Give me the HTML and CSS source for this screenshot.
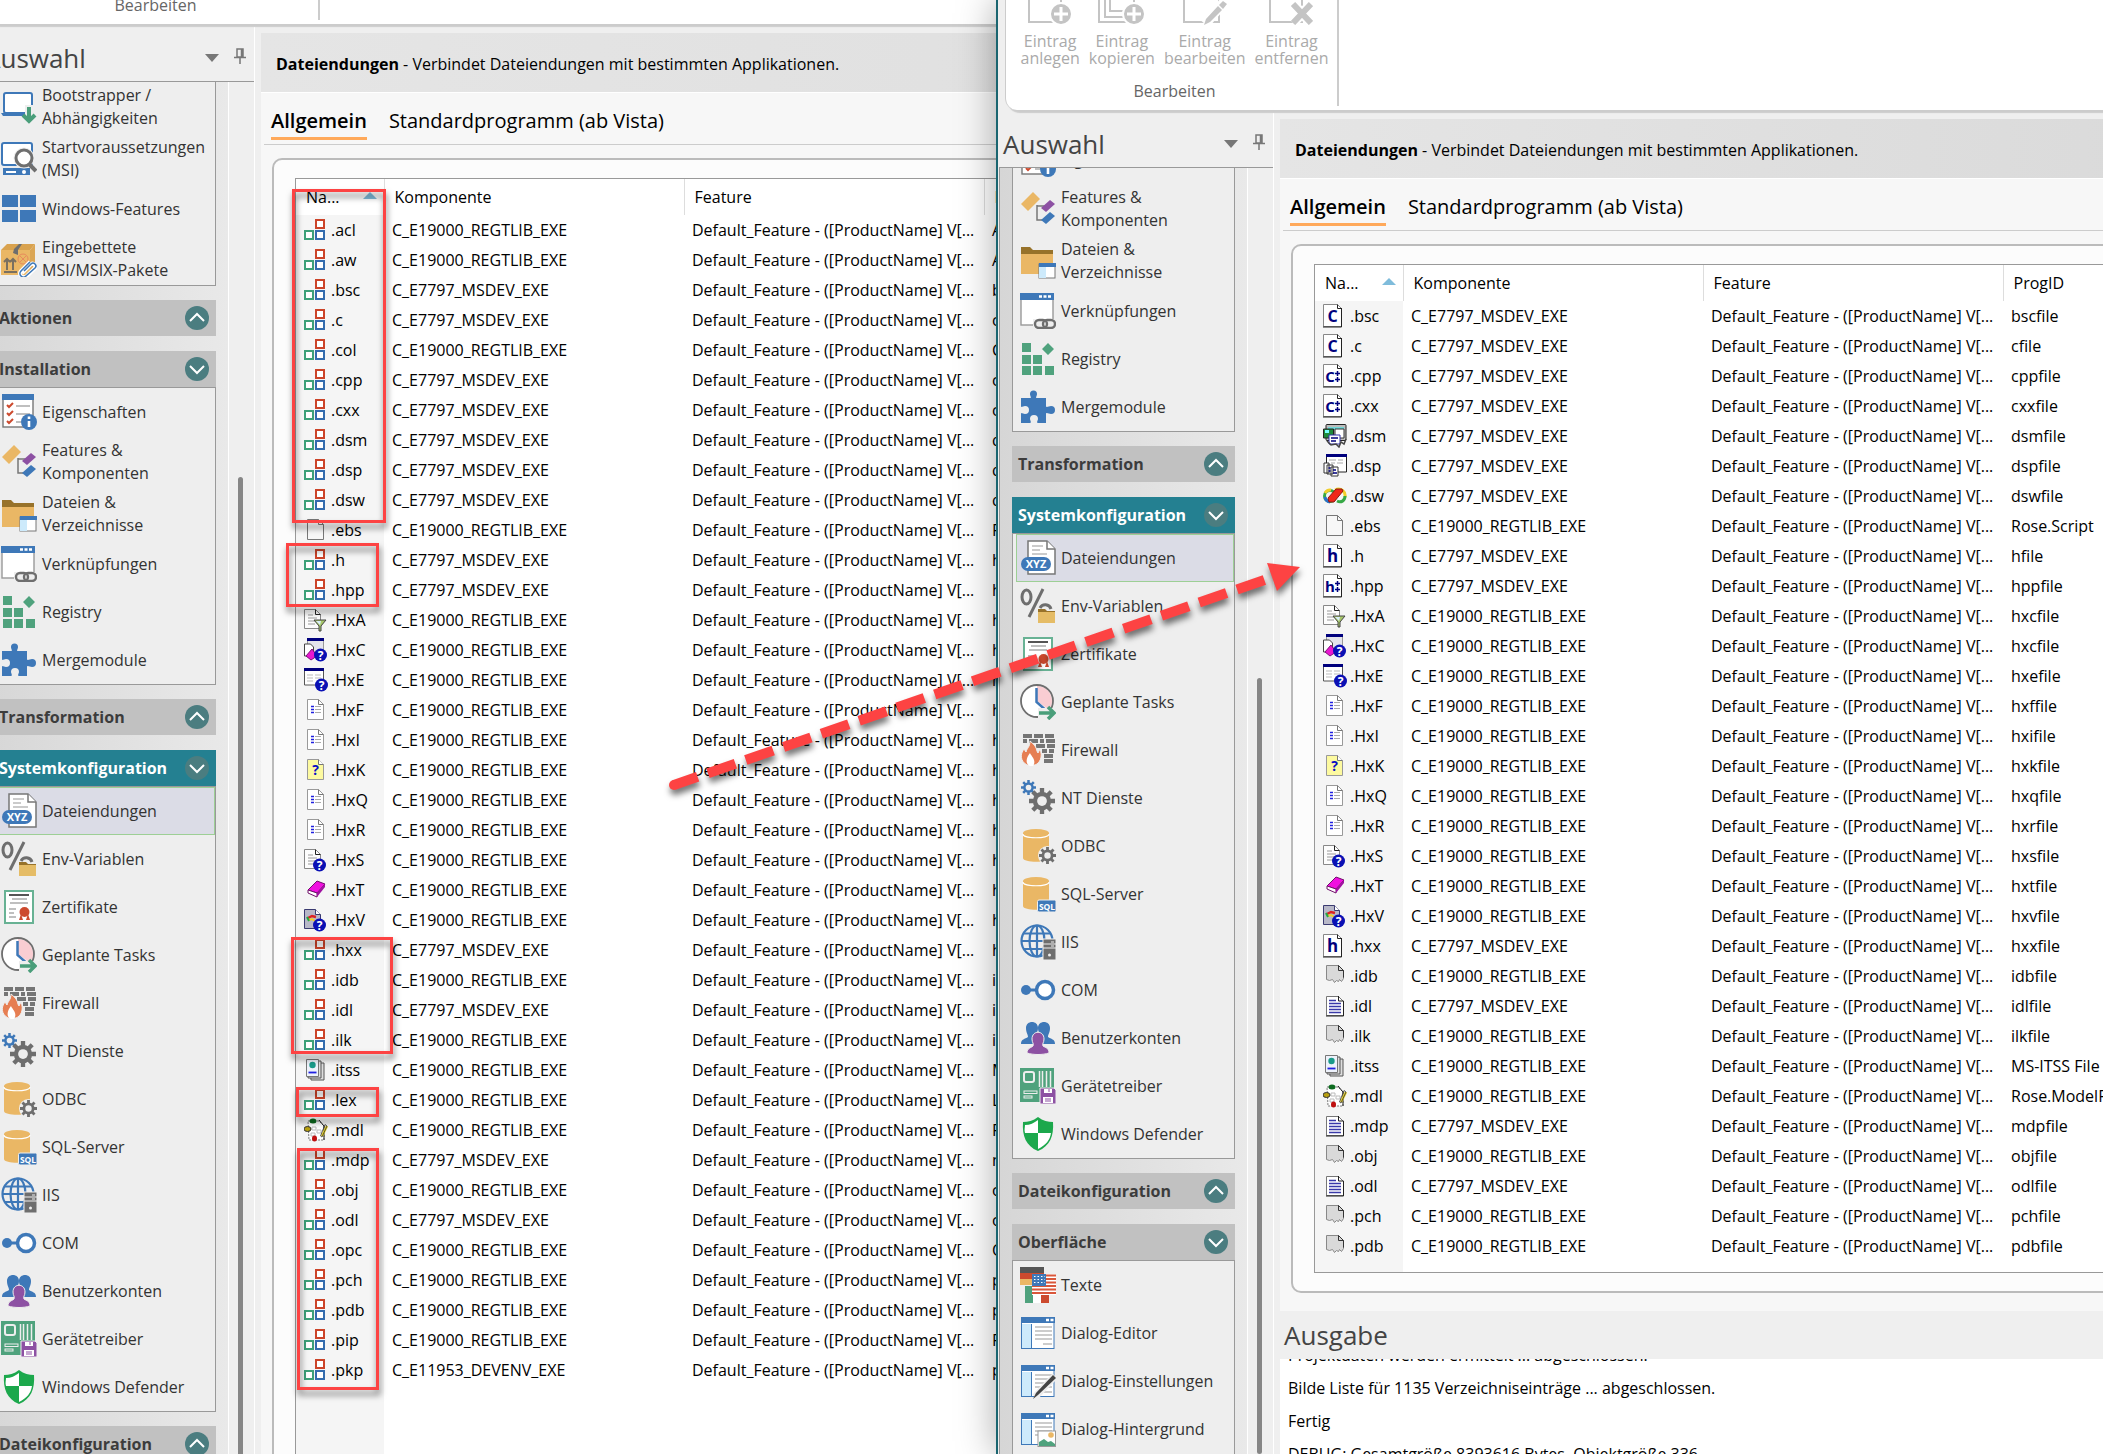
FILE: index.html
```html
<!DOCTYPE html>
<html lang="de">
<head>
<meta charset="utf-8">
<title>Dateiendungen</title>
<link rel="stylesheet" href="styles.css">
</head>
<body>
<svg class="sprite" aria-hidden="true">
  <symbol id="n-boot" viewBox="0 0 36 36"><rect x="3" y="4" width="28" height="20" rx="2" fill="#fff" stroke="#3e78b8" stroke-width="2"/><path d="M0 24h32v3H2z" fill="#3e78b8"/><path d="M28 16v12" stroke="#eee" stroke-width="8"/><path d="M28 18v14M22 26l6 6 6-6" fill="none" stroke="#4a9e7a" stroke-width="4"/></symbol>
  <symbol id="n-start" viewBox="0 0 36 36"><rect x="1" y="2" width="30" height="22" rx="2" fill="#fff" stroke="#3e78b8" stroke-width="2"/><path d="M2 27h27v7H2z" fill="#3e78b8"/><path d="M5 31h10" stroke="#fff" stroke-width="2"/><circle cx="23" cy="31" r="2" fill="#fff"/><circle cx="23" cy="17" r="8" fill="#fff" stroke="#eee" stroke-width="5"/><circle cx="23" cy="17" r="8" fill="#fff" stroke="#6e6e6e" stroke-width="3"/><path d="M28 23l7 7" stroke="#6e6e6e" stroke-width="4"/></symbol>
  <symbol id="n-win" viewBox="0 0 36 36"><path d="M1 4h16v12H1zM19 4h16v12H19zM1 19h16v12H1zM19 19h16v12H19z" fill="#3e78b8"/></symbol>
  <symbol id="n-box" viewBox="0 0 36 36"><path d="M0 9l6-6h28l-5 6z" fill="#d9a24e"/><path d="M0 9h29v25H0z" fill="#eab765"/><path d="M29 9l5-6v24l-5 7z" fill="#dba655"/><path d="M12 12l1-4 5-5h3l-4 6v5z" fill="#6e6e6e"/><path d="M6 29V19M12 29V19M3 21l3-3 3 3M9 21l3-3 3 3M3 31h13" fill="none" stroke="#7a7060" stroke-width="2"/><circle cx="22" cy="18" r="5" fill="none" stroke="#e88b5c"/><path d="M19 15l6 6M25 15l-6 6" stroke="#e88b5c"/><path d="M21 32l9-9a3 3 0 0 1 4 4l-9 9a4 4 0 0 1-5-6l9-9" fill="none" stroke="#fff" stroke-width="4"/><path d="M23 30l7-7a2 2 0 0 1 4 4l-9 8a3 3 0 0 1-5-5l9-9" fill="none" stroke="#3e78b8" stroke-width="1.6"/></symbol>
  <symbol id="n-props" viewBox="0 0 36 36"><rect x="2" y="2" width="30" height="31" fill="#fff" stroke="#777" stroke-width="1.4"/><path d="M1 0h32v6H1z" fill="#3e78b8"/><path d="M6 11l2 2 4-4M6 19l2 2 4-4M6 27l2 2 4-4" fill="none" stroke="#cc4a2e" stroke-width="2"/><path d="M15 12h14M15 20h14M15 28h5" stroke="#aaa" stroke-width="1.5"/><circle cx="28" cy="28" r="8" fill="#3e78b8"/><path d="M28 22.500v2.500M28 27v6" stroke="#fff" stroke-width="2.600"/></symbol>
  <symbol id="n-feat" viewBox="0 0 36 36"><path d="M17 14v15h11M17 15h9" fill="none" stroke="#777" stroke-width="1.500"/><path d="M1 13L13 1l7 7L8 20z" fill="#eab765"/><path d="M21 17l9-8 5 4-9 8z" fill="#8d51a3"/><path d="M21 29l9-8 5 4-9 8z" fill="#3e78b8"/></symbol>
  <symbol id="n-files" viewBox="0 0 36 36"><path d="M1 9V4h9l3 3h20v6H1z" fill="#97722a"/><path d="M1 11h32v20H1z" fill="#eab765"/><rect x="19" y="21" width="16" height="14" fill="#fff" stroke="#777"/><path d="M19 24h7v11h-7z" fill="#cdeafb"/><path d="M19 20h17v4H19z" fill="#3e78b8"/></symbol>
  <symbol id="n-link" viewBox="0 0 36 36"><rect x="1" y="1" width="32" height="31" fill="#fff" stroke="#999" stroke-width="1.400"/><path d="M0 0h34v7H0z" fill="#3e78b8"/><path d="M19 3.500h3M23.500 3.500h3M28 3.500h3" stroke="#fff" stroke-width="2.500"/><path d="M13 26h23v10H13z" fill="#eee"/><g fill="none" stroke="#6e6e6e" stroke-width="2.400"><rect x="15" y="27" width="12" height="8" rx="4"/><rect x="23" y="27" width="12" height="8" rx="4"/></g></symbol>
  <symbol id="n-reg" viewBox="0 0 36 36"><path d="M2 2h9v9H2zM2 14h9v9H2zM2 25h9v9H2zM13 14h9v9h-9zM13 25h9v9h-9zM25 25h9v9h-9zM28 2l6 6-6 6-6-6z" fill="#4fa27d"/></symbol>
  <symbol id="n-puz" viewBox="0 0 36 36"><path d="M1 9h9c2 0 0-2 0-4a3.500 3.500 0 0 1 7 0c0 2-2 4 0 4h9v8c0 2 3 0 5 0a4 4 0 0 1 0 8c-2 0-5-2-5 0v9h-8c-2 0 0-3 0-4a4 4 0 0 0-8 0c0 1 2 4 0 4H1v-9c0-2 2 0 4 0a4 4 0 0 0 0-8c-2 0-4 2-4 0z" fill="#3e78b8"/></symbol>
  <symbol id="n-ext" viewBox="0 0 36 36"><path d="M8 1h19l8 8v25H8z" fill="#fff" stroke="#777" stroke-width="1.500"/><path d="M27 1v8h8" fill="#fff" stroke="#777" stroke-width="1.500"/><path d="M12 6h11M12 10h8M12 14h15" stroke="#bbb" stroke-width="1.500"/><rect x="1" y="17" width="30" height="14" rx="7" fill="#3e78b8"/><text x="16" y="28" text-anchor="middle" class="ico-b" font-size="11" fill="#fff">XYZ</text></symbol>
  <symbol id="n-env" viewBox="0 0 36 36"><ellipse cx="6.500" cy="9" rx="4.500" ry="7" fill="none" stroke="#6e6e6e" stroke-width="3"/><path d="M23 1L9 29" stroke="#6e6e6e" stroke-width="3"/><path d="M20 20a6 6 0 0 1 11 1" fill="none" stroke="#6e6e6e" stroke-width="3"/><path d="M18 21h7l2 2h8v5H18z" fill="#97722a"/><path d="M18 24h17v11H18z" fill="#e5bc66"/></symbol>
  <symbol id="n-cert" viewBox="0 0 36 36"><rect x="4" y="2" width="28" height="32" fill="#fff" stroke="#68b294" stroke-width="2"/><path d="M8 6h20" stroke="#555" stroke-width="2"/><path d="M11 10h15M9 14h18M8 20h7M8 24h5M8 28h7" stroke="#aaa" stroke-width="1.500"/><path d="M20 25l-2 6h4zM27 25l2 6h-4z" fill="#cc4a2e"/><circle cx="23.500" cy="23" r="5" fill="#cc4a2e"/></symbol>
  <symbol id="n-task" viewBox="0 0 36 36"><circle cx="17" cy="17" r="16" fill="#fff"/><path d="M17 17V2a15 15 0 0 1 12 24z" fill="#f9cdd2"/><circle cx="17" cy="17" r="16" fill="none" stroke="#6e6e6e" stroke-width="1.800"/><path d="M16.500 4v14l8 7" fill="none" stroke="#3e78b8" stroke-width="2.500"/><path d="M18 24h18v12H18z" fill="#eee"/><path d="M19 29h14M28 23l6 6-6 6" fill="none" stroke="#4a9e7a" stroke-width="3.500"/></symbol>
  <symbol id="n-fire" viewBox="0 0 36 36"><g stroke="#757575" stroke-width="4"><path d="M3 4h32" stroke-dasharray="9 2"/><path d="M3 9h32" stroke-dasharray="4 2 9 2"/><path d="M16 14h19" stroke-dasharray="9 2"/><path d="M22 19h13" stroke-dasharray="5 2"/><path d="M24 24h11M24 29h11" stroke-dasharray="9 2"/></g><path d="M10 9c8 6 6 10 8 12l2-4c3 8 0 14-5 16H7C0 29 0 22 4 17l2 3c1-4 4-5 4-11z" fill="#e67e52" stroke="#eee"/><path d="M10 34c-5-2-4-8 0-13 1 3 7 7 3 13z" fill="#fff"/></symbol>
  <symbol id="gear" viewBox="0 0 24 24"><path d="M12 0v24M0 12h24M3.500 3.500l17 17M20.500 3.500l-17 17" stroke="currentColor" stroke-width="4"/><circle cx="12" cy="12" r="8.500" fill="currentColor"/><circle cx="12" cy="12" r="4.500" fill="#eee"/></symbol>
  <symbol id="n-nt" viewBox="0 0 36 36"><use href="#gear" x="1" y="0" width="15" height="15" color="#3e78b8"/><use href="#gear" x="9" y="8" width="26" height="26" color="#6e6e6e"/></symbol>
  <symbol id="cyl" viewBox="0 0 36 36"><path d="M3 5v25c0 5 26 5 26 0V5z" fill="#eab765"/><ellipse cx="16" cy="5" rx="13" ry="4" fill="#eab765"/><path d="M3 6c0 5 26 5 26 0" fill="none" stroke="#fff" stroke-width="1.200"/></symbol>
  <symbol id="n-odbc" viewBox="0 0 36 36"><use href="#cyl" width="36" height="36"/><circle cx="27.500" cy="27.500" r="9.500" fill="#eee"/><use href="#gear" x="19" y="19" width="17" height="17" color="#6e6e6e"/></symbol>
  <symbol id="n-sql" viewBox="0 0 36 36"><use href="#cyl" width="36" height="36"/><rect x="17.500" y="24" width="18.500" height="12" rx="1.500" fill="#3e78b8" stroke="#eee"/><text x="27" y="33.500" text-anchor="middle" class="ico-b" font-size="8.500" fill="#fff">SQL</text></symbol>
  <symbol id="n-iis" viewBox="0 0 36 36"><g fill="none" stroke="#3e78b8" stroke-width="2.200"><circle cx="17" cy="17" r="15.500"/><ellipse cx="17" cy="17" rx="7.500" ry="15.500"/><path d="M17 1v32M3 9.500h28M1 17h32M3 25h28"/></g><path d="M23 15h13v21H23z" fill="#6e6e6e" stroke="#eee"/><path d="M23 20h13M23 24h13" stroke="#eee"/><path d="M31 18h3M31 22h3" stroke="#eee"/><circle cx="29.500" cy="31" r="1.500" fill="#eee"/></symbol>
  <symbol id="n-com" viewBox="0 0 36 36"><circle cx="6" cy="18" r="5" fill="#3e78b8"/><path d="M6 18h10" stroke="#3e78b8" stroke-width="3"/><circle cx="25" cy="18" r="8.500" fill="#fff" stroke="#3e78b8" stroke-width="3.500"/></symbol>
  <symbol id="n-user" viewBox="0 0 36 36"><g fill="#3e78b8"><path d="M6 8c0-8 12-8 12 0 0 5-3 6-2 9l4 2v5H1c0-5 4-5 7-7 0-3-2-4-2-9z"/><path d="M18 8c0-8 12-8 12 0 0 5-2 6-2 9 3 2 7 2 7 7H16v-5l4-2c1-3-2-4-2-9z"/></g><path d="M12 19c0-9 12-9 12 0 0 4-2 4-1 7 3 2 6 2 6 7-6 2-16 2-22 0 0-5 4-5 6-7 1-3-1-3-1-7z" fill="#8d51a3" stroke="#eee"/></symbol>
  <symbol id="n-drv" viewBox="0 0 36 36"><path d="M0 0h34v34H0z" fill="#4fa27d"/><rect x="4" y="4" width="10" height="10" rx="2" fill="none" stroke="#eee" stroke-width="2"/><path d="M19.500 3v16M22.500 3v16M26.500 3v16M30.500 3v16" stroke="#eee" stroke-width="1.500"/><rect x="4" y="23" width="13" height="2.500" fill="none" stroke="#eee"/><rect x="4" y="28" width="8" height="2" fill="none" stroke="#eee"/><path d="M20 20h14l2 2v14H20z" fill="#8d51a3" stroke="#eee"/><path d="M23 29h10v6H23zM24 21h8v4h-8z" fill="#fff"/><path d="M29 21v3M25 31h6M25 33h6" stroke="#8d51a3"/></symbol>
  <symbol id="n-def" viewBox="0 0 36 36"><path d="M18 1C13 5 8 6 3 6c-1 14 3 24 15 29C30 30 34 20 33 6c-5 0-10-1-15-5z" fill="#1ca84c"/><path d="M18 4v13H5c-1-3 0-6 0-8 5 0 9-2 13-5zM18 17h13c-1 7-5 12-13 16z" fill="#fff"/></symbol>
  <symbol id="n-flag" viewBox="0 0 36 36"><path d="M0 0h24v6H0z" fill="#555"/><path d="M0 6h24v6H0z" fill="#cc4a2e"/><path d="M0 12h12v6H0z" fill="#eab765"/><path d="M5 19h8v17H5z" fill="#4fa27d"/><path d="M13 28h8v8h-8z" fill="#fff"/><path d="M21 28h8v8h-8z" fill="#cc4a2e"/><path d="M12 7h24v21H12z" fill="#fff"/><path d="M12 8.500h24M12 12h24M12 15.500h24M12 19h24M12 22.500h24M12 26h24" stroke="#d9573b" stroke-width="1.800"/><path d="M12 7h14v12H12z" fill="#3e78b8"/><path d="M14 9.500h11M14 12.500h11M14 15.500h11" stroke="#fff" stroke-width="1.200" stroke-dasharray="1.500 2"/></symbol>
  <symbol id="n-dlg" viewBox="0 0 36 36"><rect x="1.500" y="2.500" width="32.500" height="31" fill="#fff" stroke="#3e78b8"/><path d="M2 9h9v24H2z" fill="#cdeafb"/><path d="M1 2h34v6H1z" fill="#3e78b8"/><path d="M26 5h3M30.500 5h3" stroke="#fff" stroke-width="2.500"/><path d="M11.500 9v24" stroke="#3e78b8"/><path d="M15 12h17M15 16h17M15 20h17M15 24h17M23 29h9" stroke="#999" stroke-width="1.200"/></symbol>
  <symbol id="n-dlge" viewBox="0 0 36 36"><use href="#n-dlg" width="36" height="36"/><path d="M35 13L15 34" stroke="#eee" stroke-width="7"/><path d="M36 15L18 32l-5 4 3-6 17-18z" fill="#444"/></symbol>
  <symbol id="n-dlgb" viewBox="0 0 36 36"><use href="#n-dlg" width="36" height="36"/><rect x="18" y="20" width="17.500" height="15.500" fill="#fff" stroke="#999"/><circle cx="31" cy="24" r="2.800" fill="#eab765"/><path d="M19 35v-4l5-3 4 3 3-1 4 3v2z" fill="#4fa27d"/></symbol>

  <symbol id="f-comp" viewBox="0 0 24 24"><g fill="#fff" stroke-width="2"><path d="M12 2h8v8h-8z" stroke="#cc4328"/><path d="M1 13h8v8H1z" stroke="#3da078"/><path d="M12 13h8v8h-8z" stroke="#336cae"/></g></symbol>
  <symbol id="f-blank" viewBox="0 0 24 24"><path d="M3.500 1.500h11l5 5v15h-16z" fill="#f7f7f7" stroke="#777"/><path d="M14.500 1.500v5h5" fill="none" stroke="#777"/></symbol>
  <symbol id="page" viewBox="0 0 24 24"><path d="M.5.500h14l4 4v18H.5z" fill="#fff" stroke="#888"/><path d="M14.500.500v4h4M18.500 4v19H0" fill="none" stroke="#222"/></symbol>
  <symbol id="f-c" viewBox="0 0 24 24"><use href="#page" width="24" height="24"/><text x="9.500" y="18" text-anchor="middle" class="ico-b" font-size="16" fill="#00007d">C</text></symbol>
  <symbol id="f-cpp" viewBox="0 0 24 24"><use href="#page" width="24" height="24"/><text x="7" y="18" text-anchor="middle" class="ico-b" font-size="15" fill="#00007d">C</text><path d="M12 9.500h5M14.500 7v5M12 15.500h5M14.500 13v5" stroke="#00007d" stroke-width="1.500"/></symbol>
  <symbol id="f-h" viewBox="0 0 24 24"><use href="#page" width="24" height="24"/><text x="9.500" y="18" text-anchor="middle" class="ico-b" font-size="17" fill="#00007d">h</text></symbol>
  <symbol id="f-hpp" viewBox="0 0 24 24"><use href="#page" width="24" height="24"/><text x="7" y="18" text-anchor="middle" class="ico-b" font-size="15" fill="#00007d">h</text><path d="M12 9.500h5M14.500 7v5M12 15.500h5M14.500 13v5" stroke="#00007d" stroke-width="1.500"/></symbol>
  <symbol id="f-dsm" viewBox="0 0 24 24"><rect x="3" y=".5" width="20" height="16" rx="1" fill="#bbb" stroke="#222"/><path d="M5 3h16v3H5z" fill="#6fd8d8"/><path d="M12 5h9v9h-9z" fill="#fff" stroke="#333"/><path d="M.5 5h10v9H.5z" fill="#1d8a3a" stroke="#222"/><path d="M2 6h4v3H2z" fill="#7ff"/><path d="M6 11h11v9H6z" fill="#fff" stroke="#33a"/><path d="M8 14h7M8 17h5" stroke="#00007d" stroke-width="1.500"/><path d="M4 17l4 4 5-1 3 3 2-5 3 2 2-5" fill="none" stroke="#444" stroke-width="1.500"/></symbol>
  <symbol id="f-dsp" viewBox="0 0 24 24"><path d="M3.500 1h20v17h-20z" fill="#fff" stroke="#222"/><path d="M3 0h21v3H3z" fill="#00007d"/><path d="M6 6h7M15 6h5M8 9h4M14 9h6" stroke="#aaa"/><path d="M1 9h5v10H1zM4 11h6v9H4zM8 13h7v9H8z" fill="#fff" stroke="#333"/><path d="M10 16h3M10 19h4M5.500 14h2M5.500 17h2" stroke="#00007d" stroke-width="1.300"/></symbol>
  <symbol id="f-dsw" viewBox="0 0 24 24"><ellipse cx="7" cy="12" rx="5.500" ry="5.500" fill="none" stroke="#36a845" stroke-width="3"/><path d="M2 9a6 6 0 0 1 6-3" fill="none" stroke="#f3cf2a" stroke-width="3"/><path d="M12 6c6-3 11 2 10 7" fill="none" stroke="#f3cf2a" stroke-width="3"/><path d="M22 12c0 5-4 7-8 5" fill="none" stroke="#36a845" stroke-width="3"/><path d="M2 13a6 6 0 0 0 5 5" fill="none" stroke="#2a70c8" stroke-width="3"/><path d="M5 14L13 5h6l1 2-9 11H6z" fill="#f0281a" stroke="#8a1a10"/></symbol>
  <symbol id="lines" viewBox="0 0 24 24"><path d="M.5 1.500h11l5 5v14H.5z" fill="#fdfdfd" stroke="#888"/><path d="M11.500 1.500v5h5" fill="none" stroke="#222"/><path d="M4 7h5M4 10h9M4 13h9M4 16h7" stroke="#999"/></symbol>
  <symbol id="help" viewBox="0 0 24 24"><circle cx="16.500" cy="17" r="6.500" fill="#0a10b4"/><text x="16.500" y="21.500" text-anchor="middle" class="ico-b" font-size="12" fill="#fff">?</text></symbol>
  <symbol id="f-hxa" viewBox="0 0 24 24"><use href="#lines" width="24" height="24"/><path d="M10 12h12l-5 6v5h-2v-5z" fill="#a8c86a" stroke="#444"/><path d="M12 13h5l-1 4z" fill="#d8eef8"/></symbol>
  <symbol id="f-hxc" viewBox="0 0 24 24"><path d="M3.500 1h16v13h-16z" fill="#e4e4ec" stroke="#999"/><path d="M3 0h17v3H3z" fill="#00007d"/><path d="M.5 6h6l3 3v9h-9z" fill="#fff" stroke="#444"/><path d="M2 18l6-7 5 7-6 4z" fill="#e818d0" stroke="#80107a"/><use href="#help" width="24" height="24"/></symbol>
  <symbol id="f-hxe" viewBox="0 0 24 24"><path d="M.5 1h19v16H.5z" fill="#fff" stroke="#555"/><path d="M0 0h20v3H0z" fill="#00007d"/><path d="M3 7h6M11 7h6M3 10h6M11 10h6M3 13h6" stroke="#bbb"/><use href="#help" x="1" width="24" height="24"/></symbol>
  <symbol id="f-hxf" viewBox="0 0 24 24"><path d="M3.500 1.500h11l5 5v15h-16z" fill="#fff" stroke="#999"/><path d="M14.500 1.500v5h5" fill="none" stroke="#777"/><path d="M7 8.500h3M7 11.500h3M7 14.500h3" stroke="#2020e0" stroke-width="1.500"/><path d="M11 8.500h6M11 11.500h6M11 14.500h6" stroke="#aaa"/></symbol>
  <symbol id="f-hxk" viewBox="0 0 24 24"><path d="M3.500 1.500h11l5 5v15h-16z" fill="#fdfaa0" stroke="#999"/><path d="M14.500 1.500v5h5" fill="#fff" stroke="#777"/><text x="11.500" y="17" text-anchor="middle" class="ico-b" font-size="14" fill="#0a10c4">?</text></symbol>
  <symbol id="f-hxs" viewBox="0 0 24 24"><use href="#lines" width="24" height="24"/><use href="#help" x="-1" width="24" height="24"/></symbol>
  <symbol id="f-hxt" viewBox="0 0 24 24"><path d="M4 12l9-9 8 3-8 9z" fill="#f010e0" stroke="#70106a"/><path d="M4 12v3l9 4v-4z" fill="#fff" stroke="#70106a"/><path d="M13 15l8-9v3l-8 10z" fill="#a010a0"/></symbol>
  <symbol id="f-hxv" viewBox="0 0 24 24"><path d="M.5 1.500h11l5 5v14H.5z" fill="#b8b8c8" stroke="#3a3a70"/><path d="M11.500 1.500v5h5" fill="#fff" stroke="#3a3a70"/><path d="M4 10l4-2 4 1" fill="none" stroke="#d22" stroke-width="2.500"/><path d="M5 12l3-1 3 2" fill="none" stroke="#f3cf2a" stroke-width="2"/><path d="M3 9l2 4" stroke="#2a4" stroke-width="2"/><use href="#help" x="-1" width="24" height="24"/></symbol>
  <symbol id="f-torn" viewBox="0 0 24 24"><path d="M3.500 1.500h12l5 5v8l-2 3-2-2-1 2-2-1-2 2-2-3-3 1-3-1z" fill="#d9d9d9" stroke="#888"/><path d="M15.500 1.500l5 5v7M15.500 1.500v5h5" fill="none" stroke="#333"/></symbol>
  <symbol id="f-txt" viewBox="0 0 24 24"><path d="M3.500 2.500h12l5 5v14h-17z" fill="#fff" stroke="#777"/><path d="M15.500 2v5h5v15H3" fill="none" stroke="#222"/><path d="M6 6.500h7M6 9.500h12M6 12.500h12M6 15.500h12M6 18.500h12" stroke="#3a3aa8" stroke-width="1.300"/></symbol>
  <symbol id="f-itss" viewBox="0 0 24 24"><path d="M6 5h14v17H7z" fill="#ddd" stroke="#555"/><path d="M4 3h13v17H4z" fill="#ddd" stroke="#555"/><path d="M2.500 1.500h12v17h-12z" fill="#eef2fb" stroke="#777"/><circle cx="8.500" cy="7" r="3.200" fill="#1a9a8a"/><path d="M4.500 14.500h8" stroke="#2020e0" stroke-width="1.800"/></symbol>
  <symbol id="f-mdl" viewBox="0 0 24 24"><path d="M4 3h11l5 5v14H5z" fill="#fff" stroke="#777" stroke-dasharray="2 1"/><path d="M15 2l5 6v14" fill="none" stroke="#222"/><path d="M8 9h4v3H8zM13 12h4v3h-4zM7 15h4v3H7z" fill="none" stroke="#bbb"/><ellipse cx="9" cy="3" rx="3.500" ry="2.500" fill="#0d6b1f"/><ellipse cx="3.500" cy="11" rx="3.500" ry="2.500" fill="#b8a010" stroke="#333"/><ellipse cx="10.500" cy="20.500" rx="2.500" ry="3" fill="#c01010"/><path d="M23 8l-5 10" stroke="#e8d020" stroke-width="2.500"/><path d="M21 6.500l2 1.500-5 11-1.500-1z" fill="none" stroke="#333" stroke-width=".8"/></symbol>

  <symbol id="r-new" viewBox="0 0 44 32"><path d="M1 0v29h32V0" fill="none" stroke="#c4c4c4" stroke-width="2"/><circle cx="33" cy="21" r="11" fill="#c4c4c4" stroke="#fff" stroke-width="2"/><path d="M33 14v14M26 21h14" stroke="#fff" stroke-width="3"/></symbol>
  <symbol id="r-copy" viewBox="0 0 48 32"><path d="M1 0v29h32M7 0v24h26M12 0v18h24V0" fill="none" stroke="#c4c4c4" stroke-width="2"/><circle cx="36" cy="21" r="11" fill="#c4c4c4" stroke="#fff" stroke-width="2"/><path d="M36 14v14M29 21h14" stroke="#fff" stroke-width="3"/></symbol>
  <symbol id="r-edit" viewBox="0 0 44 32"><path d="M1 0v29h35V0" fill="none" stroke="#c4c4c4" stroke-width="2"/><path d="M42 8L22 31" stroke="#fff" stroke-width="10"/><path d="M40 8l4 3-4 5-4-4zM35 13l4 4-12 12-6 3 2-6z" fill="#c4c4c4"/></symbol>
  <symbol id="r-del" viewBox="0 0 44 32"><path d="M1 0v29h32V0" fill="none" stroke="#c4c4c4" stroke-width="2"/><path d="M24 11l18 19M42 11L24 30" stroke="#fff" stroke-width="10"/><path d="M24 11l18 19M42 11L24 30" stroke="#c4c4c4" stroke-width="6"/></symbol>
  <symbol id="pin" viewBox="0 0 12 16"><path d="M3 1h6v8H3zM7.500 1v8M0 9.500h12M6 10v6" fill="none" stroke="#777" stroke-width="1.500"/></symbol>
  <symbol id="up" viewBox="0 0 24 24"><path d="M5 15l7-7 7 7" fill="none" stroke="#fff" stroke-width="2"/></symbol>
  <symbol id="down" viewBox="0 0 24 24"><path d="M5 9l7 7 7-7" fill="none" stroke="#fff" stroke-width="2"/></symbol>
</svg>

<div class="desktop">
  <section class="window window-back">
    <div class="ribbon">
      <div class="ribbon-group"><span class="ribbon-label">Bearbeiten</span></div>
    </div>
    <div class="body">
      <aside class="sidebar">
        <header class="pane-title"><h2>Auswahl</h2><span class="drop"></span><svg class="pin"><use href="#pin"/></svg></header>
        <div class="scroller">
          <nav class="groups groups-back" data-nav="left" data-scroll="2"></nav>
          <div class="track track-back"><div class="thumb"></div></div>
        </div>
      </aside>
      <main class="content">
        <p class="banner"><b>Dateiendungen</b> - Verbindet Dateiendungen mit bestimmten Applikationen.</p>
        <nav class="tabs"><button class="tab active">Allgemein</button><button class="tab">Standardprogramm (ab Vista)</button></nav>
        <div class="frame"><div class="grid">
          <table>
            <colgroup><col class="c-name"><col class="c-wide"><col class="c-wide"><col></colgroup>
            <thead><tr><th>Na...<span class="sort"></span></th><th>Komponente</th><th>Feature</th><th>ProgID</th></tr></thead>
            <tbody data-rows="left"></tbody>
          </table>
        </div></div>
      </main>
    </div>
  </section>

  <section class="window window-front">
    <div class="ribbon">
      <div class="ribbon-group">
        <div class="ribbon-buttons">
          <button><svg width="44" height="32"><use href="#r-new"/></svg>Eintrag<br>anlegen</button>
          <button><svg width="48" height="32"><use href="#r-copy"/></svg>Eintrag<br>kopieren</button>
          <button><svg width="44" height="32"><use href="#r-edit"/></svg>Eintrag<br>bearbeiten</button>
          <button><svg width="44" height="32"><use href="#r-del"/></svg>Eintrag<br>entfernen</button>
        </div>
        <span class="ribbon-label">Bearbeiten</span>
      </div>
    </div>
    <div class="body">
      <aside class="sidebar">
        <header class="pane-title"><h2>Auswahl</h2><span class="drop"></span><svg class="pin"><use href="#pin"/></svg></header>
        <div class="scroller">
          <nav class="groups" data-nav="right" data-scroll="34"></nav>
          <div class="track track-front"><div class="thumb"></div></div>
        </div>
      </aside>
      <main class="content">
        <p class="banner"><b>Dateiendungen</b> - Verbindet Dateiendungen mit bestimmten Applikationen.</p>
        <nav class="tabs"><button class="tab active">Allgemein</button><button class="tab">Standardprogramm (ab Vista)</button></nav>
        <div class="frame"><div class="grid">
          <table>
            <colgroup><col class="c-name"><col class="c-wide"><col class="c-wide"><col></colgroup>
            <thead><tr><th>Na...<span class="sort"></span></th><th>Komponente</th><th>Feature</th><th>ProgID</th></tr></thead>
            <tbody data-rows="right"></tbody>
          </table>
        </div></div>
        <section class="output">
          <h2>Ausgabe</h2>
          <div class="log" data-scroll="20">
            <p>Projektdaten werden ermittelt ... abgeschlossen.</p>
            <p>Bilde Liste für 1135 Verzeichniseinträge ... abgeschlossen.</p>
            <p>Fertig</p>
            <p>DEBUG: Gesamtgröße 8393616 Bytes, Objektgröße 336</p>
          </div>
        </section>
      </main>
    </div>
  </section>

  <svg class="marks" aria-hidden="true">
    <g fill="none" stroke="#fd4343" stroke-width="3">
      <rect x="293.500" y="190.500" width="91" height="331"/>
      <rect x="287.500" y="544.500" width="90" height="61"/>
      <rect x="292.500" y="938.500" width="99" height="114"/>
      <rect x="297.500" y="1088.500" width="80" height="27"/>
      <rect x="298.500" y="1149.500" width="79" height="239"/>
    </g>
    <g>
      <path d="M674 785L1267 579" stroke="#fd4343" stroke-width="10" stroke-dasharray="29 11" stroke-dashoffset="4" fill="none"/>
      <circle cx="674" cy="785" r="5" fill="#fd4343"/>
      <path d="M1267 563l33 4-23 24z" fill="#fd4343"/>
    </g>
  </svg>
</div>
<script src="script.js"></script>
</body>
</html>
```
FILE: styles.css
```css
* { box-sizing: border-box; }
body { margin: 0; font: 16px/23px "Open Sans", "Noto Sans", sans-serif; color: #000; }
h2, p { margin: 0; font-weight: 400; }
button { font: inherit; background: none; border: 0; padding: 0; margin: 0; color: inherit; }
.sprite { position: absolute; width: 0; height: 0; }
.ico-b { font-family: "Open Sans", sans-serif; font-weight: 700; }

.desktop { position: relative; height: 100vh; overflow: hidden; background: #eee; }
.window { position: absolute; display: flex; flex-direction: column; background: #efefef; border-left: 2px solid #1a6570; }
.window-back { left: -23px; top: -86px; right: 0; bottom: -86px; }
.window-front { left: 996px; top: 0; right: -60px; bottom: 0; box-shadow: 0 0 36px rgba(0, 0, 0, .34); }

.ribbon { flex: none; display: flex; height: 110px; margin-left: 7px; padding-bottom: 4px; background: #fff; border-left: 1px solid #ccc; border-bottom-left-radius: 12px; box-shadow: 3px 2px 1px 1px #ccc; clip-path: inset(0 0 -6px -1px); }
.ribbon-group { display: flex; flex-direction: column; justify-content: flex-end; width: 333px; padding-left: 6px; border-right: 2px solid #ccc; }
.ribbon-buttons { display: flex; justify-content: center; gap: 9px; color: #aaa; line-height: 17px; }
.ribbon-buttons svg { display: block; margin: 0 auto 8px; }
.ribbon-label { text-align: center; color: #666; padding: 13px 0 3px; }

.body { flex: 1; min-height: 0; display: flex; gap: 6px; }
.sidebar { flex: none; width: 276px; display: flex; flex-direction: column; border-right: 1px solid #fff; }
.pane-title { display: flex; align-items: center; height: 58px; padding: 10px 8px 0 4px; border-bottom: 1px solid #999; margin-left: 1px; color: #444; }
.pane-title h2 { flex: 1; font-size: 26px; line-height: 36px; }
.drop { border: 7px solid transparent; border-top: 8px solid #777; border-bottom: 0; margin-right: 15px; }
.pin { width: 12px; height: 16px; margin-bottom: 4px; }
.scroller { flex: 1; min-height: 0; display: flex; margin-left: 1px; }
.groups { flex: 1; overflow: hidden; padding: 0 12px; border-left: 1px solid #999; background: linear-gradient(90deg, #d6d6d6, #e9e9e9); }
.groups-back { padding-bottom: 120px; }
.track { flex: none; width: 26px; border-left: 1px solid #fff; background: #efefef; display: flex; flex-direction: column; align-items: center; }
.track-front { padding-top: 510px; }
.track-back { padding-top: 395px; }
.thumb { flex: 1; width: 5px; border-radius: 3px; background: #868686; margin-right: 2px; }

.group { margin-bottom: 15px; }
.group.open { margin-bottom: 14px; }
.group-head { display: flex; width: 100%; height: 36px; align-items: center; justify-content: space-between; padding: 0 7px 0 6px; background: #c1c1c1; font-weight: 700; color: #3c3c3c; }
.group-head svg { width: 24px; height: 24px; border-radius: 50%; background: #4b7d80; }
.group-head.current { background: #248091; color: #fff; }
.group ul { margin: 0; padding: 0; list-style: none; border: 1px solid #999; background: #eee; }
.group.more ul { padding-bottom: 48px; }
.group a { display: flex; align-items: center; gap: 5px; min-height: 48px; padding: 1px 0 1px 3px; margin-left: 3px; border: 1px solid transparent; color: #333; text-decoration: none; white-space: nowrap; }
.group a.two { min-height: 52px; }
.group a.selected { border-color: #9dcf95; background: #dbdce6; }
.group a svg { flex: none; width: 36px; height: 36px; }

.content { flex: 1; min-width: 0; display: flex; flex-direction: column; padding-top: 9px; background: linear-gradient(#efefef 9px, #f7f7f7 9px); }
.banner { flex: none; height: 60px; padding: 20px 15px 0; border-bottom: 1px solid #fff; background: linear-gradient(90deg, #e5e5e5, #dadada); }
.tabs { flex: none; display: flex; gap: 22px; height: 52px; padding: 14px 7px 0; margin-left: 3px; border-bottom: 1px solid #ccc; }
.tab { height: 33px; font-size: 20px; line-height: 28px; padding-bottom: 2px; border-bottom: 3px solid transparent; }
.tab.active { font-weight: 600; border-color: #ffa95a; }
.frame { flex: 1; min-height: 0; margin: 13px 8px 18px 11px; padding: 18px 21px; border: 2px solid #bbb; border-radius: 10px; background: #fcfcfc; display: flex; }
.grid { flex: 1; overflow: hidden; border: 1px solid #999; background: linear-gradient(90deg, #f5f5f5 88px, #fff 88px); }
table { width: 100%; table-layout: fixed; border-collapse: collapse; }
.c-name { width: 88px; }
.c-wide { width: 300px; }
th { height: 36px; padding: 0 0 0 10px; text-align: left; font-weight: 400; background: #fff; border-right: 1px solid #ddd; white-space: nowrap; }
.sort { display: inline-block; margin: 0 0 4px 23px; border: 7px solid transparent; border-bottom: 7px solid #7fbcdb; border-top: 0; }
td { height: 30px; padding: 0 0 0 8px; white-space: nowrap; overflow: hidden; }
td.name span { display: flex; align-items: center; gap: 3px; }
td.name svg { flex: none; width: 24px; height: 24px; }

.output { flex: none; height: 143px; display: flex; flex-direction: column; }
.output h2 { height: 48px; padding: 6px 4px 0; font-size: 26px; line-height: 36px; color: #444; background: #efefef; }
.log { flex: 1; min-height: 0; overflow: hidden; background: #fff; padding-left: 8px; line-height: 33px; }

.marks { position: absolute; left: 0; top: 0; width: 100%; height: 100%; pointer-events: none; }
.marks g { filter: drop-shadow(1px 5px 3px rgba(0, 0, 0, .55)); }
```
FILE: script.js
```js
// Navigation: [title, state, items]; an item is [icon, label, second line]
const system = ['Systemkonfiguration', 'current', [
  ['ext', 'Dateiendungen'], ['env', 'Env-Variablen'], ['cert', 'Zertifikate'], ['task', 'Geplante Tasks'],
  ['fire', 'Firewall'], ['nt', 'NT Dienste'], ['odbc', 'ODBC'], ['sql', 'SQL-Server'], ['iis', 'IIS'],
  ['com', 'COM'], ['user', 'Benutzerkonten'], ['drv', 'Gerätetreiber'], ['def', 'Windows Defender']]];
const install = [
  ['props', 'Eigenschaften'], ['feat', 'Features &amp;', 'Komponenten'], ['files', 'Dateien &amp;', 'Verzeichnisse'],
  ['link', 'Verknüpfungen'], ['reg', 'Registry'], ['puz', 'Mergemodule']];
const nav = {
  left: [
    ['', 'open', [['boot', 'Bootstrapper /', 'Abhängigkeiten'], ['start', 'Startvoraussetzungen', '(MSI)'],
      ['win', 'Windows-Features'], ['box', 'Eingebettete', 'MSI/MSIX-Pakete']]],
    ['Aktionen', 'closed'], ['Installation', 'open', install], ['Transformation', 'closed'], system,
    ['Dateikonfiguration', 'closed']],
  right: [
    ['', 'open', install], ['Transformation', 'closed'], system, ['Dateikonfiguration', 'closed'],
    ['Oberfläche', 'open more', [['flag', 'Texte'], ['dlg', 'Dialog-Editor'], ['dlge', 'Dialog-Einstellungen'],
      ['dlgb', 'Dialog-Hintergrund']]]]
};
const item = ([icon, a, b], selected) =>
  `<li><a href="#" class="${b ? 'two' : ''}${selected ? 'selected' : ''}"><svg><use href="#n-${icon}"/></svg><span>${a}${b ? '<br>' + b : ''}</span></a></li>`;
const group = ([title, state, items]) =>
  `<div class="group ${items ? 'open' : ''} ${state}">` +
  (title ? `<button class="group-head ${state === 'current' ? 'current' : ''}">${title}<svg><use href="#${items ? 'down' : 'up'}"/></svg></button>` : '') +
  (items ? `<ul>${items.map((i, n) => item(i, state === 'current' && n === 0)).join('')}</ul>` : '') + '</div>';
document.querySelectorAll('[data-nav]').forEach(el => { el.innerHTML = nav[el.dataset.nav].map(group).join(''); });

// File types: "name component icon progid", component 7 = MSDEV, 19 = REGTLIB, 11 = DEVENV
const components = { 7: 'C_E7797_MSDEV_EXE', 19: 'C_E19000_REGTLIB_EXE', 11: 'C_E11953_DEVENV_EXE' };
const help = ['HxA 19 hxa hxcfile', 'HxC 19 hxc hxcfile', 'HxE 19 hxe hxefile', 'HxF 19 hxf hxffile', 'HxI 19 hxf hxifile',
  'HxK 19 hxk hxkfile', 'HxQ 19 hxf hxqfile', 'HxR 19 hxf hxrfile', 'HxS 19 hxs hxsfile', 'HxT 19 hxt hxtfile', 'HxV 19 hxv hxvfile'];
const rows = {
  left: ['acl 19 comp A', 'aw 19 comp A', 'bsc 7 comp bscfile', 'c 7 comp cfile', 'col 19 comp C', 'cpp 7 comp cppfile',
    'cxx 7 comp cxxfile', 'dsm 7 comp dsmfile', 'dsp 7 comp dspfile', 'dsw 7 comp dswfile', 'ebs 19 blank Rose.Script',
    'h 7 comp hfile', 'hpp 7 comp hppfile', ...help, 'hxx 7 comp hxxfile', 'idb 19 comp idbfile', 'idl 7 comp idlfile',
    'ilk 19 comp ilkfile', 'itss 19 itss MS-ITSS File', 'lex 19 comp L', 'mdl 19 mdl Rose.ModelFile', 'mdp 7 comp mdpfile',
    'obj 19 comp objfile', 'odl 7 comp odlfile', 'opc 19 comp O', 'pch 19 comp pchfile', 'pdb 19 comp pdbfile',
    'pip 19 comp P', 'pkp 11 comp p'],
  right: ['bsc 7 c bscfile', 'c 7 c cfile', 'cpp 7 cpp cppfile', 'cxx 7 cpp cxxfile', 'dsm 7 dsm dsmfile', 'dsp 7 dsp dspfile',
    'dsw 7 dsw dswfile', 'ebs 19 blank Rose.Script', 'h 7 h hfile', 'hpp 7 hpp hppfile', ...help, 'hxx 7 h hxxfile',
    'idb 19 torn idbfile', 'idl 7 txt idlfile', 'ilk 19 torn ilkfile', 'itss 19 itss MS-ITSS File', 'mdl 19 mdl Rose.ModelFile',
    'mdp 7 txt mdpfile', 'obj 19 torn objfile', 'odl 7 txt odlfile', 'pch 19 torn pchfile', 'pdb 19 torn pdbfile']
};
const row = line => {
  const [name, comp, icon, ...id] = line.split(' ');
  return `<tr><td class="name"><span><svg><use href="#f-${icon}"/></svg>.${name}</span></td><td>${components[comp]}</td>` +
    `<td>Default_Feature - ([ProductName] V[...</td><td>${id.join(' ')}</td></tr>`;
};
document.querySelectorAll('[data-rows]').forEach(el => { el.innerHTML = rows[el.dataset.rows].map(row).join(''); });
document.querySelectorAll('[data-scroll]').forEach(el => { el.scrollTop = Number(el.dataset.scroll); });
```
